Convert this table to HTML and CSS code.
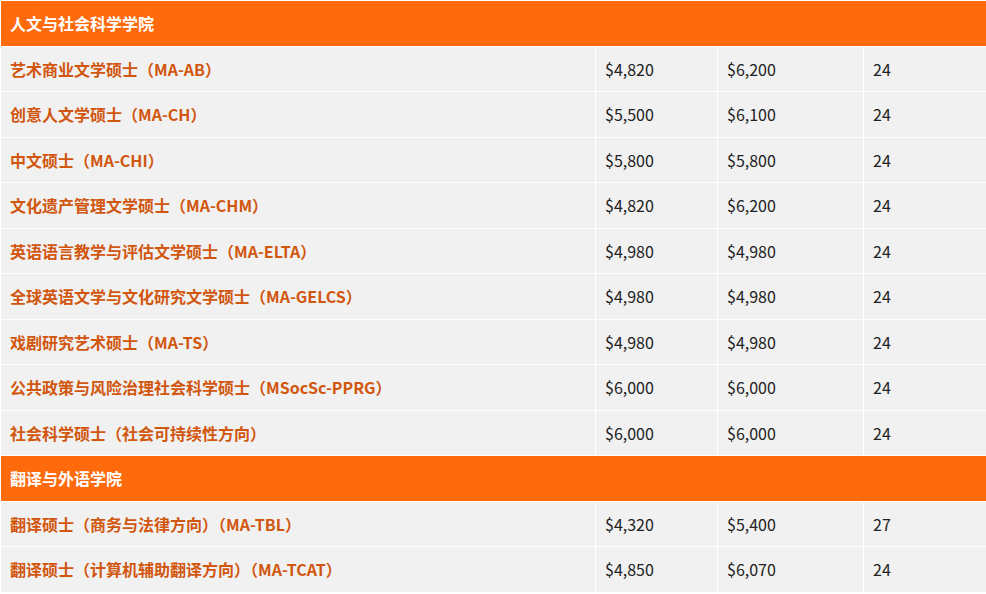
FILE: index.html
```html
<!DOCTYPE html>
<html lang="zh-CN">
<head>
<meta charset="utf-8">
<link rel="stylesheet" href="styles.css">
</head>
<body>
<table class="fees">
  <colgroup>
    <col class="c-name"><col class="c-a"><col class="c-b"><col class="c-c">
  </colgroup>
  <tbody>
    <tr class="school"><td colspan="4">人文与社会科学学院</td></tr>
    <tr><td class="prog">艺术商业文学硕士（MA-AB）</td><td>$4,820</td><td>$6,200</td><td>24</td></tr>
    <tr><td class="prog">创意人文学硕士（MA-CH）</td><td>$5,500</td><td>$6,100</td><td>24</td></tr>
    <tr><td class="prog">中文硕士（MA-CHI）</td><td>$5,800</td><td>$5,800</td><td>24</td></tr>
    <tr><td class="prog">文化遗产管理文学硕士（MA-CHM）</td><td>$4,820</td><td>$6,200</td><td>24</td></tr>
    <tr><td class="prog">英语语言教学与评估文学硕士（MA-ELTA）</td><td>$4,980</td><td>$4,980</td><td>24</td></tr>
    <tr><td class="prog">全球英语文学与文化研究文学硕士（MA-GELCS）</td><td>$4,980</td><td>$4,980</td><td>24</td></tr>
    <tr><td class="prog">戏剧研究艺术硕士（MA-TS）</td><td>$4,980</td><td>$4,980</td><td>24</td></tr>
    <tr><td class="prog">公共政策与风险治理社会科学硕士（MSocSc-PPRG）</td><td>$6,000</td><td>$6,000</td><td>24</td></tr>
    <tr><td class="prog">社会科学硕士（社会可持续性方向）</td><td>$6,000</td><td>$6,000</td><td>24</td></tr>
    <tr class="school"><td colspan="4">翻译与外语学院</td></tr>
    <tr><td class="prog">翻译硕士（商务与法律方向）（MA-TBL）</td><td>$4,320</td><td>$5,400</td><td>27</td></tr>
    <tr><td class="prog">翻译硕士（计算机辅助翻译方向）（MA-TCAT）</td><td>$4,850</td><td>$6,070</td><td>24</td></tr>
  </tbody>
</table>
</body>
</html>
```

FILE: styles.css
```css
html, body {
  margin: 0;
  padding: 0;
  background: #ffffff;
}
body {
  font-family: "Noto Sans CJK SC", "Noto Sans", sans-serif;
  font-size: 16px;
  color: #222222;
}
.fees {
  width: 986px;
  border-collapse: collapse;
  table-layout: fixed;
}
.c-name { width: 595px; }
.c-a { width: 122px; }
.c-b { width: 146px; }
.c-c { width: 123px; }
.fees td {
  height: 45.5px;
  padding: 0 9px;
  box-sizing: border-box;
  border: 1px solid #ffffff;
  background: #f1f1f1;
  vertical-align: middle;
  line-height: 20px;
  white-space: nowrap;
}
.fees td.prog {
  color: #d1560e;
  font-weight: 700;
}
.fees tr.school td {
  background: #ff6a0c;
  color: #ffffff;
  font-weight: 700;
}
```
